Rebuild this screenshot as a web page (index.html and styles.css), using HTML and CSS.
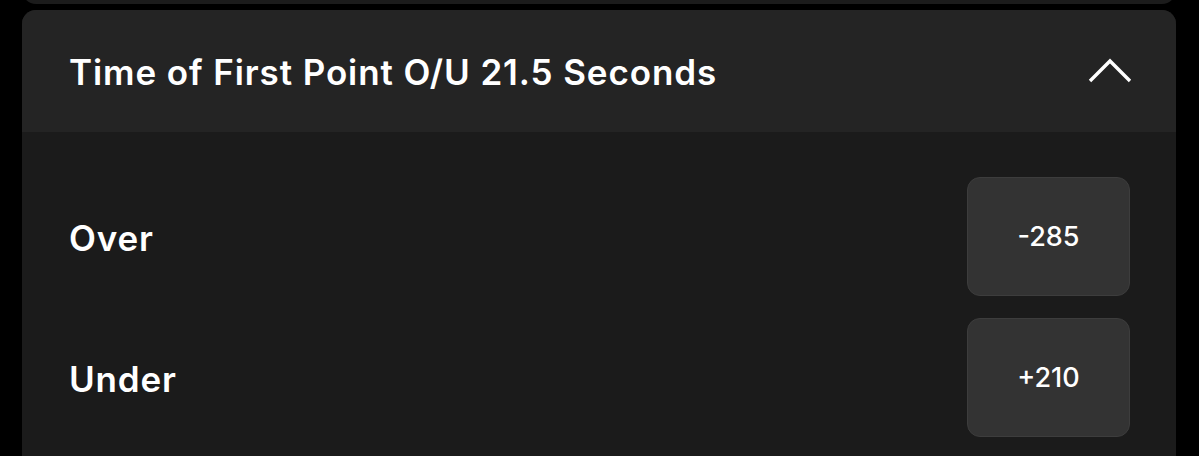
FILE: index.html
```html
<!DOCTYPE html>
<html>
<head>
<meta charset="utf-8">
<link rel="stylesheet" href="styles.css">
</head>
<body>
<div class="page">
  <div class="prev-card"></div>
  <section class="card">
    <header class="card-header">
      <h2 class="title">Time of First Point O/U 21.5 Seconds</h2>
      <svg class="chevron" width="44" height="26" viewBox="0 0 44 26">
        <path d="M2 23 L22 3 L42 23" fill="none" stroke="#fff" stroke-width="3.4" stroke-linecap="butt" stroke-linejoin="miter"/>
      </svg>
    </header>
    <div class="card-body">
      <div class="row">
        <span class="label">Over</span>
        <button class="odds">-285</button>
      </div>
      <div class="row">
        <span class="label">Under</span>
        <button class="odds">+210</button>
      </div>
    </div>
  </section>
</div>
</body>
</html>
```
FILE: styles.css
```css
html, body {
  margin: 0;
  padding: 0;
  background: #000;
  height: 456px;
  overflow: hidden;
}
.page {
  padding: 0 23px 0 22px;
  font-family: "Inter", "Liberation Sans", Arial, sans-serif;
  color: #fff;
}
.prev-card {
  height: 14px;
  margin-top: -10px;
  background: #1c1c1c;
  border-radius: 0 0 14px 14px;
}
.card {
  margin-top: 6px;
  border-radius: 14px 14px 0 0;
  overflow: hidden;
  background: #1b1b1b;
}
.card-header {
  height: 122px;
  background: #242424;
  display: flex;
  align-items: center;
  justify-content: space-between;
  padding: 0 44px 0 47px;
}
.title {
  margin: 0;
  font-size: 35px;
  font-weight: 600;
  letter-spacing: 0.9px;
  padding-top: 1px;
}
.chevron {
  display: block;
}
.card-body {
  padding: 45px 46px 40px 47px;
  display: flex;
  flex-direction: column;
  gap: 22px;
}
.row {
  display: flex;
  align-items: center;
  justify-content: space-between;
}
.label {
  font-size: 35px;
  font-weight: 600;
  letter-spacing: 0.8px;
  padding-top: 3px;
}
.odds {
  width: 163px;
  height: 119px;
  background: #333;
  border: 1px solid #3d3d3d;
  border-radius: 13px;
  color: #fff;
  font-family: "Inter", "Liberation Sans", Arial, sans-serif;
  font-size: 27px;
  font-weight: 500;
  padding: 0;
}
```
